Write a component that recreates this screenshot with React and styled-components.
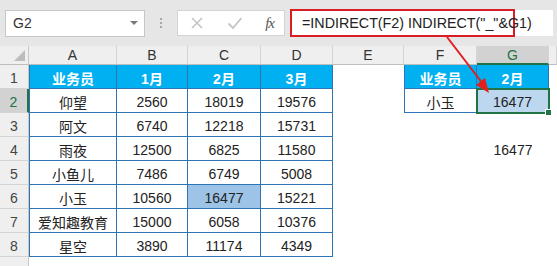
import React from 'react';
import styled, { createGlobalStyle, css } from 'styled-components';

const GlobalStyle = createGlobalStyle`
  html, body {
    margin: 0;
    padding: 0;
    background: #ffffff;
    overflow: hidden;
  }
  body {
    font-family: "Liberation Sans", "Noto Sans CJK SC", Arial, sans-serif;
  }
`;

const green = '#217346';
const tableBlue = '#2e75b6';

const Page = styled.div`
  position: relative;
  width: 557px;
  height: 266px;
  overflow: hidden;
`;

const Toolbar = styled.div`
  height: 46px;
  background: #e6e6e6;
  display: flex;
  align-items: center;
  padding-left: 5px;
  box-sizing: border-box;
`;

const NameBox = styled.div`
  width: 140px;
  height: 27px;
  box-sizing: border-box;
  background: #fff;
  border: 1px solid #c6c6c6;
  display: flex;
  align-items: center;
  justify-content: space-between;
  padding: 0 6px 0 7px;
  font-size: 14px;
  color: #333;
`;

const DropArrow = styled.span`
  width: 0;
  height: 0;
  border-left: 4px solid transparent;
  border-right: 4px solid transparent;
  border-top: 4px solid #7a7a7a;
`;

const Dots = styled.div`
  width: 32px;
  display: flex;
  flex-direction: column;
  align-items: center;
  gap: 2px;
  span {
    width: 2px;
    height: 2px;
    background: #a8a8a8;
  }
`;

const ButtonBox = styled.div`
  width: 108px;
  height: 26px;
  box-sizing: border-box;
  background: #fff;
  border: 1px solid #d4d4d4;
  display: flex;
  align-items: center;
  justify-content: space-between;
  padding: 0 10px 0 12px;
`;

const Fx = styled.span`
  font-family: "Liberation Serif", "DejaVu Serif", serif;
  font-style: italic;
  font-size: 15px;
  color: #555;
  letter-spacing: -1px;
`;

const FormulaField = styled.div`
  flex: 1;
  height: 26px;
  margin: 0 4px 0 5px;
  background: #fff;
  display: flex;
  align-items: center;
`;

const Callout = styled.div`
  width: 225px;
  height: 28px;
  box-sizing: border-box;
  border: 2px solid #d81e22;
  display: flex;
  align-items: center;
  padding-left: 10px;
  font-size: 14.3px;
  color: #222;
  white-space: nowrap;
`;

const Sheet = styled.div`
  display: grid;
  grid-template-columns: 29px 88px 71px 73px 72px 71px 73px 72px 1fr;
  grid-template-rows: 19px repeat(8, 24px) 24px;
  font-size: 14px;
`;

const Corner = styled.div`
  background: #efefef;
  border-right: 1px solid #c8c8c8;
  border-bottom: 1px solid #bdbdbd;
  display: flex;
  align-items: flex-end;
  justify-content: flex-end;
  padding: 0 3px 3px 0;
  box-sizing: border-box;
  &::after {
    content: '';
    border-left: 11px solid transparent;
    border-bottom: 11px solid #bcbcbc;
  }
`;

const ColHead = styled.div`
  background: ${p => (p.$active ? '#d2d2d2' : '#efefef')};
  color: ${p => (p.$active ? green : '#333')};
  border-right: 1px solid #d4d4d4;
  border-bottom: ${p => (p.$active ? `2px solid ${green}` : '1px solid #bdbdbd')};
  box-sizing: border-box;
  display: flex;
  align-items: center;
  justify-content: center;
  line-height: 1;
`;

const RowHead = styled.div`
  background: ${p => (p.$active ? '#d2d2d2' : '#efefef')};
  color: ${p => (p.$active ? green : '#444')};
  border-right: ${p => (p.$active ? `2px solid ${green}` : '1px solid #c8c8c8')};
  border-bottom: 1px solid #d4d4d4;
  box-sizing: border-box;
  display: flex;
  align-items: flex-end;
  justify-content: center;
  padding-bottom: 2px;
`;

const Cell = styled.div`
  box-sizing: border-box;
  display: flex;
  align-items: center;
  justify-content: center;
  color: #222;
  padding-top: 2px;
  white-space: nowrap;
  position: relative;

  ${p => p.$bordered && css`
    border-right: 1px solid ${tableBlue};
    border-bottom: 1px solid ${tableBlue};
  `}
  ${p => p.$left && css`
    border-left: 1px solid ${tableBlue};
  `}
  ${p => p.$head && css`
    background: #00b0f0;
    color: #fff;
    font-weight: bold;
  `}
  ${p => p.$fill && css`
    background: ${p.$fill};
  `}
  ${p => p.$selected && css`
    outline: 2px solid ${green};
    outline-offset: -1px;
    z-index: 1;
    &::after {
      content: '';
      position: absolute;
      right: -4px;
      bottom: -4px;
      width: 5px;
      height: 5px;
      background: ${green};
      border: 1px solid #fff;
    }
  `}
`;

const Arrow = styled.svg`
  position: absolute;
  left: 0;
  top: 0;
  pointer-events: none;
  z-index: 2;
`;

const cols = ['A', 'B', 'C', 'D', 'E', 'F', 'G'];

const data = [
  ['仰望', 2560, 18019, 19576],
  ['阿文', 6740, 12218, 15731],
  ['雨夜', 12500, 6825, 11580],
  ['小鱼儿', 7486, 6749, 5008],
  ['小玉', 10560, 16477, 15221],
  ['爱知趣教育', 15000, 6058, 10376],
  ['星空', 3890, 11174, 4349],
];

// E, F, G columns for rows 2..8 (index 0 = row 2)
const sideCells = {
  0: [null, { text: '小玉', bordered: true, left: true }, { text: 16477, selected: true, bordered: true, fill: '#bdd7ee' }],
  2: [null, null, { text: 16477 }],
};

const Cross = () => (
  <svg width="14" height="14" viewBox="0 0 14 14">
    <path d="M2 2 L12 12 M12 2 L2 12" stroke="#c4c4c4" strokeWidth="1.6" fill="none" />
  </svg>
);

const Check = () => (
  <svg width="16" height="14" viewBox="0 0 16 14">
    <path d="M1.5 7.5 L6 12 L14.5 2" stroke="#c4c4c4" strokeWidth="1.8" fill="none" />
  </svg>
);

const App = () => {
  return (
    <Page>
      <GlobalStyle />
      <Toolbar>
        <NameBox>
          <span>G2</span>
          <DropArrow />
        </NameBox>
        <Dots><span /><span /><span /></Dots>
        <ButtonBox>
          <Cross />
          <Check />
          <Fx>fx</Fx>
        </ButtonBox>
        <FormulaField>
          <Callout>=INDIRECT(F2) INDIRECT("_"&amp;G1)</Callout>
        </FormulaField>
      </Toolbar>

      <Sheet>
        <Corner />
        {cols.map(c => (
          <ColHead key={c} $active={c === 'G'}>{c}</ColHead>
        ))}
        <ColHead />

        <RowHead>1</RowHead>
        {['业务员', '1月', '2月', '3月'].map((t, i) => (
          <Cell key={t} $head $bordered $left={i === 0}>{t}</Cell>
        ))}
        <Cell />
        <Cell $head $bordered $left>业务员</Cell>
        <Cell $head $bordered>2月</Cell>
        <Cell />

        {data.map((row, r) => {
          const side = sideCells[r] || [null, null, null];
          return (
            <React.Fragment key={r}>
              <RowHead $active={r === 0}>{r + 2}</RowHead>
              {row.map((v, i) => (
                <Cell
                  key={i}
                  $bordered
                  $left={i === 0}
                  $fill={r === 4 && i === 2 ? '#9dc3e6' : undefined}
                >
                  {v}
                </Cell>
              ))}
              {side.map((s, i) => (
                s ? (
                  <Cell
                    key={'s' + i}
                    $bordered={s.bordered}
                    $left={s.left}
                    $selected={s.selected}
                    $fill={s.fill}
                  >
                    {s.text}
                  </Cell>
                ) : <Cell key={'s' + i} />
              ))}
              <Cell />
            </React.Fragment>
          );
        })}

        <RowHead />
      </Sheet>

      <Arrow width="557" height="266">
        <line x1="447" y1="37" x2="483" y2="84" stroke="#e0201e" strokeWidth="2" />
        <polygon points="489,93 476,85 485,78" fill="#e0201e" />
      </Arrow>
    </Page>
  );
};

export default App;
